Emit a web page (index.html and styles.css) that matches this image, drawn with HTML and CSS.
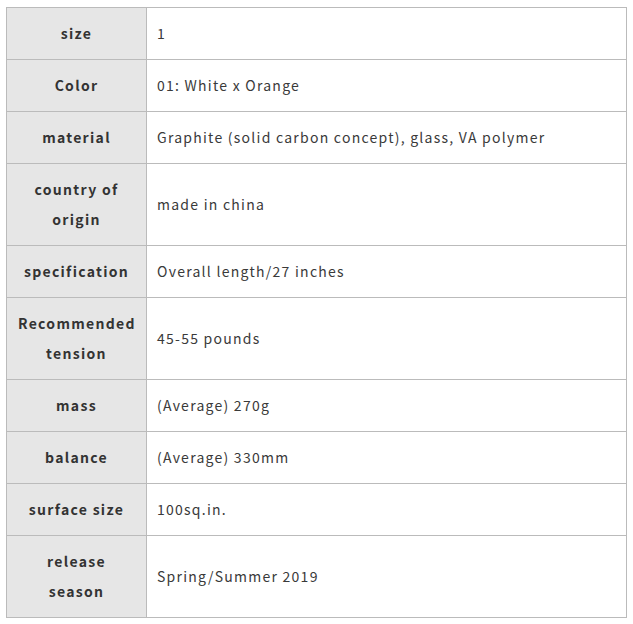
FILE: index.html
```html
<!DOCTYPE html>
<html>
<head>
<meta charset="utf-8">
<link rel="stylesheet" href="styles.css">
</head>
<body>
<table class="spec">
  <tr><th>size</th><td>1</td></tr>
  <tr><th>Color</th><td>01: White x Orange</td></tr>
  <tr><th>material</th><td>Graphite (solid carbon concept), glass, VA polymer</td></tr>
  <tr><th>country of origin</th><td>made in china</td></tr>
  <tr><th>specification</th><td>Overall length/27 inches</td></tr>
  <tr><th>Recommended tension</th><td>45-55 pounds</td></tr>
  <tr><th>mass</th><td>(Average) 270g</td></tr>
  <tr><th>balance</th><td>(Average) 330mm</td></tr>
  <tr><th>surface size</th><td>100sq.in.</td></tr>
  <tr><th>release season</th><td>Spring/Summer 2019</td></tr>
</table>
</body>
</html>
```
FILE: styles.css
```css
html, body {
  margin: 0;
  background: #fff;
}
body {
  padding: 7px 6px;
  font-family: "Noto Sans CJK JP", "Noto Sans", sans-serif;
  font-size: 14px;
  color: #333;
}
.spec {
  width: 621px;
  table-layout: fixed;
  border-collapse: collapse;
  border: 1px solid #bbb;
}
.spec th, .spec td {
  border: 1px solid #bbb;
  padding: 10px 10px 11px;
  line-height: 30px;
}
.spec th {
  width: 117px;
  padding-left: 11px;
  padding-right: 11px;
  background: #e6e6e6;
  font-weight: bold;
  text-align: center;
  letter-spacing: 1.3px;
}
.spec td {
  text-align: left;
  font-weight: normal;
  letter-spacing: 1.25px;
  color: #3a3a3a;
}
```
